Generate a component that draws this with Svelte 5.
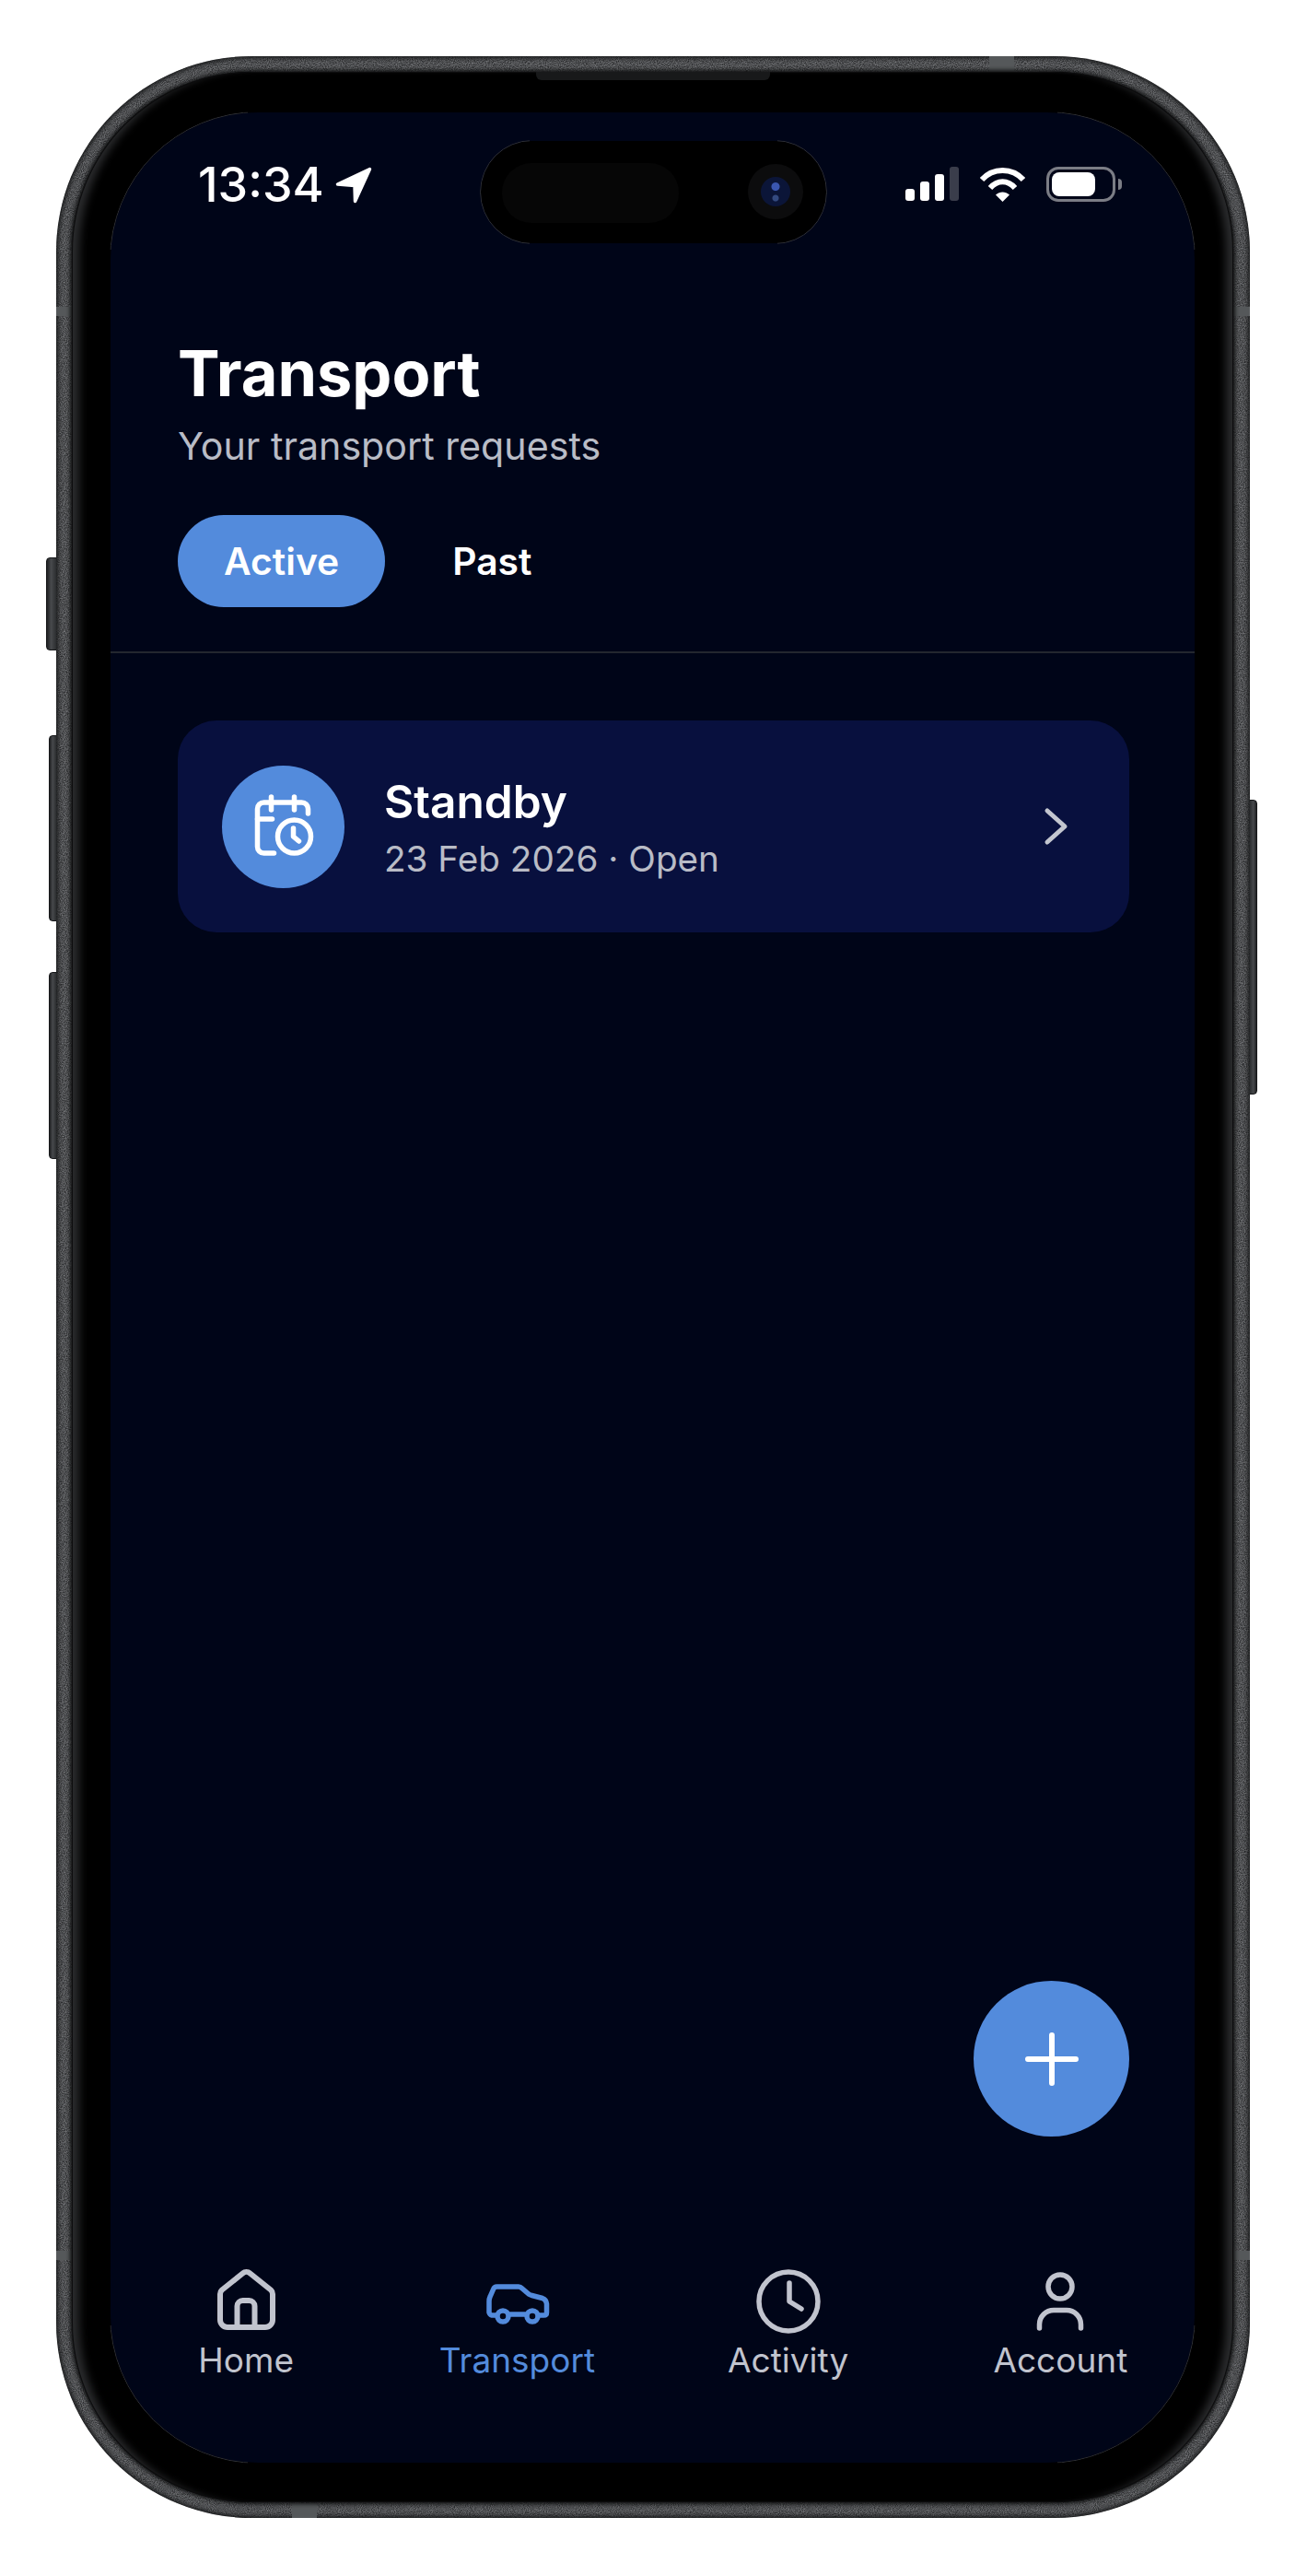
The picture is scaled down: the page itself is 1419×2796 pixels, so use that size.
<script lang="ts">
  const tabs = [
    { label: 'Active', active: true },
    { label: 'Past', active: false }
  ]
</script>

<div class="device">
  <span class="btn mute"></span>
  <span class="btn vol-up"></span>
  <span class="btn vol-down"></span>
  <span class="btn power"></span>

  <div class="phone">
    <svg class="grain" aria-hidden="true">
      <filter id="metal">
        <feTurbulence type="fractalNoise" baseFrequency="0.95" numOctaves="2" />
        <feColorMatrix values="0 0 0 0 0.46  0 0 0 0 0.47  0 0 0 0 0.49  0.9 0 0 0 -0.18" />
      </filter>
      <rect width="100%" height="100%" filter="url(#metal)" />
    </svg>
    <span class="rim"></span>
    <span class="band band-top"></span>
    <span class="band band-left-a"></span>
    <span class="band band-left-b"></span>
    <span class="band band-right-a"></span>
    <span class="band band-right-b"></span>
    <span class="band band-bottom"></span>

    <div class="bezel">
      <span class="speaker"></span>
      <div class="screen">
        <div class="island">
          <span class="faceid"></span>
          <span class="camera"><span class="lens"></span></span>
        </div>

        <div class="status">
          <div class="clock">
            <span class="time">13:34</span>
            <svg width="40" height="40" viewBox="0 0 40 40" aria-hidden="true">
              <path d="M37.5 2.5 L2.5 19 L21 20.5 L21.5 37.5 Z" fill="#fff" stroke="#fff" stroke-width="3.5" stroke-linejoin="round" />
            </svg>
          </div>
          <div class="indicators">
            <div class="signal">
              <span class="s1"></span>
              <span class="s2"></span>
              <span class="s3"></span>
              <span class="s4"></span>
            </div>
            <svg width="51" height="38" viewBox="0 0 51 38" fill="none" stroke="#fff" aria-hidden="true">
              <path d="M3 14 C15 0.5 36 0.5 48 14" stroke-width="6" />
              <path d="M12 23 C20 14 31 14 39 23" stroke-width="6" />
              <path d="M18 30.5 C22.5 26.5 28.5 26.5 33 30.5 L25.5 38 Z" fill="#fff" stroke="none" />
            </svg>
            <div class="battery">
              <span class="level"></span>
              <span class="cap"></span>
            </div>
          </div>
        </div>

        <header class="header">
          <h1>Transport</h1>
          <p>Your transport requests</p>
        </header>

        <div class="tabs">
          {#each tabs as tab}
            <button class="tab" class:active={tab.active}>{tab.label}</button>
          {/each}
        </div>

        <div class="list">
          <div class="card">
            <div class="card-icon">
              <svg width="66" height="70" viewBox="-1.5 0 66 70" fill="none" stroke="#fff" stroke-width="5.5" stroke-linecap="round" stroke-linejoin="round" aria-hidden="true">
                <path d="M21 64 H10 a7 7 0 0 1-7-7 V16 a7 7 0 0 1 7-7 H51 a7 7 0 0 1 7 7 V21" />
                <path d="M3 27 H19" />
                <path d="M18 3 V17" />
                <path d="M43 3 V17" />
                <circle cx="43" cy="46" r="18" />
                <path d="M42 37 V46 L48 51" />
              </svg>
            </div>
            <div class="card-text">
              <div class="card-title">Standby</div>
              <div class="card-sub">23 Feb 2026 · Open</div>
            </div>
            <svg class="chevron" width="30" height="44" viewBox="0 0 30 44" fill="none" stroke="#c3c6cf" stroke-width="5" stroke-linecap="round" stroke-linejoin="round" aria-hidden="true">
              <path d="M5 5 L24 22 L5 39" />
            </svg>
          </div>
        </div>

        <button class="fab" aria-label="Add">
          <svg width="64" height="64" viewBox="0 0 64 64" stroke="#fff" stroke-width="6" stroke-linecap="round" aria-hidden="true">
            <path d="M32 6 V58 M6 32 H58" />
          </svg>
        </button>

        <nav class="nav">
          <div class="nav-item">
            <svg width="72" height="72" viewBox="0 0 72 72" fill="none" stroke="currentColor" stroke-width="6" stroke-linejoin="round" aria-hidden="true">
              <g transform="translate(5 1)">
                <path d="M3 27 a6 6 0 0 1 2-4.5 L27.5 4.5 a6 6 0 0 1 8 0 L58 22.5 a6 6 0 0 1 2 4.5 V55 a8 8 0 0 1-8 8 H11 a8 8 0 0 1-8-8 Z" />
                <path d="M21.5 63 V40 a6 6 0 0 1 6-6 h7 a6 6 0 0 1 6 6 V63" />
              </g>
            </svg>
            <span>Home</span>
          </div>
          <div class="nav-item current">
            <svg width="72" height="72" viewBox="0 0 72 72" fill="none" stroke="currentColor" stroke-width="5.5" stroke-linecap="round" stroke-linejoin="round" aria-hidden="true">
              <g transform="translate(3 17)">
                <path d="M11 34 H6 a4 4 0 0 1-3-3 V19 q0-3 1-5 l3.5-8 q1-3 4-3 H35 q2 0 4 2 l7 6 q1.5 1 3.5 1.5 L61 15.5 q4 1.5 4.5 6 V31 q0 3-3 3 H58" />
                <path d="M26 33 H42" />
                <circle cx="18" cy="35" r="6" />
                <circle cx="50" cy="35" r="6" />
              </g>
            </svg>
            <span>Transport</span>
          </div>
          <div class="nav-item">
            <svg width="72" height="72" viewBox="0 0 72 72" fill="none" stroke="currentColor" stroke-width="5.5" stroke-linecap="round" stroke-linejoin="round" aria-hidden="true">
              <circle cx="36" cy="36" r="32" />
              <path d="M37 16 V36 L50 44" />
            </svg>
            <span>Activity</span>
          </div>
          <div class="nav-item shifted">
            <svg width="72" height="72" viewBox="0 0 72 72" fill="none" stroke="currentColor" stroke-width="5.5" stroke-linecap="round" stroke-linejoin="round" aria-hidden="true">
              <circle cx="36" cy="20" r="13" />
              <path d="M13.5 65 V61 a15.5 15.5 0 0 1 15.5-15.5 H43 a15.5 15.5 0 0 1 15.5 15.5 V65" />
            </svg>
            <span>Account</span>
          </div>
        </nav>
      </div>
      <span class="screen-edge"></span>
    </div>
  </div>
</div>

<style>
  :global(body) {
    background: #fff;
    font-family: Inter, 'Noto Sans', sans-serif;
  }

  .device {
    position: relative;
    width: 1296px;
    height: 2672px;
    margin: 61px 0 0 61px;
  }

  .btn {
    position: absolute;
    background: linear-gradient(90deg, #1f2022, #47494c 45%, #2c2e30);
    border: 1px solid #17181a;
    box-sizing: border-box;
  }

  .mute {
    left: -11px;
    top: 544px;
    width: 12px;
    height: 101px;
    border-radius: 4px 0 0 4px;
  }

  .vol-up {
    left: -8px;
    top: 737px;
    width: 9px;
    height: 202px;
    border-radius: 4px 0 0 4px;
  }

  .vol-down {
    left: -8px;
    top: 994px;
    width: 9px;
    height: 203px;
    border-radius: 4px 0 0 4px;
  }

  .power {
    right: -8px;
    top: 807px;
    width: 9px;
    height: 320px;
    border-radius: 0 4px 4px 0;
    background: linear-gradient(270deg, #1f2022, #47494c 45%, #2c2e30);
  }

  .phone {
    position: relative;
    height: 100%;
    overflow: hidden;
    border-radius: 212px;
    background: #2a2b2d;
  }

  .grain {
    position: absolute;
    inset: 0;
    width: 100%;
    height: 100%;
  }

  .rim {
    position: absolute;
    inset: 0;
    border-radius: inherit;
    box-shadow: inset 0 0 5px 2px #161718;
  }

  .band {
    position: absolute;
    background: #55585a;
  }

  .band-top {
    left: 1013px;
    top: 0;
    width: 27px;
    height: 17px;
  }

  .band-left-a,
  .band-right-a,
  .band-left-b,
  .band-right-b {
    width: 18px;
    height: 10px;
    top: 272px;
  }

  .band-left-a,
  .band-left-b {
    left: 0;
  }

  .band-right-a,
  .band-right-b {
    right: 0;
  }

  .band-left-b,
  .band-right-b {
    top: 2382px;
  }

  .band-bottom {
    left: 256px;
    bottom: 0;
    width: 27px;
    height: 16px;
  }

  .bezel {
    position: absolute;
    inset: 17px 18px 17px 17px;
    padding: 44px 42px 43px;
    box-sizing: border-box;
    border-radius: 195px;
    background: #000;
    box-shadow:
      0 0 4px 2px #101112,
      inset 0 0 0 1px #0c0c0d,
      inset 14px 0 10px -6px #2b2c2e,
      inset -14px 0 10px -6px #2b2c2e;
  }

  .speaker {
    position: absolute;
    left: 504px;
    top: 0;
    width: 254px;
    height: 9px;
    background: #18191a;
    border-radius: 0 0 6px 6px;
  }

  .screen {
    position: relative;
    display: flex;
    flex-direction: column;
    height: 100%;
    overflow: hidden;
    border-radius: 160px;
    background: #000518;
    color: #fff;
  }

  /* faint hairline the mockup leaves around the rounded corners only */
  .screen-edge {
    position: absolute;
    inset: 43px 41px 42px;
    border: 1px solid #2e3036;
    border-radius: 161px;
    pointer-events: none;
    --c: linear-gradient(#000 0 0);
    mask:
      var(--c) top left / 150px 150px no-repeat,
      var(--c) top right / 150px 150px no-repeat,
      var(--c) bottom left / 150px 150px no-repeat,
      var(--c) bottom right / 150px 150px no-repeat;
  }

  .island {
    position: absolute;
    left: 402px;
    top: 31px;
    width: 375px;
    height: 111px;
    border-radius: 56px;
    background: #000;
  }

  .island::after {
    content: '';
    position: absolute;
    inset: -1px;
    border: 1px solid #2e3036;
    border-radius: 57px;
    --c: linear-gradient(#000 0 0);
    mask:
      var(--c) left / 54px 100% no-repeat,
      var(--c) right / 54px 100% no-repeat;
  }

  .faceid {
    position: absolute;
    left: 23px;
    top: 24px;
    width: 192px;
    height: 65px;
    border-radius: 32px;
    background: #060606;
  }

  .camera {
    position: absolute;
    left: 290px;
    top: 25px;
    width: 60px;
    height: 60px;
    display: flex;
    align-items: center;
    justify-content: center;
    border-radius: 50%;
    background: #0c0c0d;
  }

  .lens {
    width: 32px;
    height: 32px;
    border-radius: 50%;
    background:
      radial-gradient(circle at 50% 33%, #3a56b0 0 4px, transparent 5px),
      radial-gradient(circle at 50% 72%, #33497f 0 3px, transparent 4px),
      #0b1538;
  }

  .status {
    display: flex;
    justify-content: space-between;
    align-items: flex-start;
    height: 243px;
    padding: 59px 79px 0 95px;
    box-sizing: border-box;
  }

  .clock {
    display: flex;
    align-items: center;
    gap: 12px;
    height: 40px;
  }

  .time {
    font-size: 52px;
    font-weight: 500;
    line-height: 40px;
  }

  .indicators {
    display: flex;
    align-items: flex-start;
    gap: 22px;
  }

  .signal {
    display: flex;
    align-items: flex-end;
    gap: 6px;
    height: 37px;
    margin-right: 0;
  }

  .signal span {
    width: 10px;
    border-radius: 3px;
    background: #fff;
  }

  .s1 { height: 13px; }
  .s2 { height: 21px; }
  .s3 { height: 29px; }
  .signal .s4 { height: 37px; background: #3a3d4b; }

  .battery {
    position: relative;
    width: 75px;
    height: 38px;
    margin-right: 7px;
    padding: 3px;
    box-sizing: border-box;
    border: 3px solid #7b7d85;
    border-radius: 13px;
  }

  .level {
    display: block;
    width: 47px;
    height: 26px;
    border-radius: 8px;
    background: #fff;
  }

  .cap {
    position: absolute;
    right: -10px;
    top: 10px;
    width: 4px;
    height: 12px;
    border-radius: 0 4px 4px 0;
    background: #7b7d85;
  }

  .header {
    padding: 0 73px;
  }

  h1 {
    margin: 0;
    font-size: 68.4px;
    font-weight: 700;
    line-height: 80px;
  }

  .header p {
    margin: 14px 0 0;
    font-size: 41.2px;
    line-height: 50px;
    color: #b9bcc6;
  }

  .tabs {
    display: flex;
    gap: 23px;
    padding: 50px 73px 0;
    height: 100px;
  }

  .tab {
    height: 100px;
    padding: 0 50px;
    border: 0;
    border-radius: 50px;
    background: none;
    color: #fff;
    font: 600 40.8px Inter, sans-serif;
  }

  .tab.active {
    background: #538bdc;
  }

  .list {
    flex: 1;
    margin-top: 48px;
    padding: 73px 71px 0 73px;
    border-top: 2px solid #23272f;
  }

  .card {
    display: flex;
    align-items: center;
    height: 230px;
    padding: 0 64px 0 48px;
    box-sizing: border-box;
    border-radius: 42px;
    background: #08103e;
  }

  .card-icon {
    display: flex;
    align-items: center;
    justify-content: center;
    flex: none;
    width: 133px;
    height: 133px;
    border-radius: 50%;
    background: #538bdc;
  }

  .card-text {
    flex: 1;
    margin-left: 43px;
    padding-top: 2px;
  }

  .card-title {
    font-size: 49.6px;
    font-weight: 600;
    line-height: 58px;
  }

  .card-sub {
    margin-top: 10px;
    font-size: 38.7px;
    line-height: 46px;
    color: #b9bcc6;
  }

  .fab {
    position: absolute;
    right: 71px;
    bottom: 354px;
    width: 169px;
    height: 169px;
    display: flex;
    align-items: center;
    justify-content: center;
    padding: 0;
    border: 0;
    border-radius: 50%;
    background: #538bdc;
  }

  .nav {
    display: grid;
    grid-template-columns: repeat(4, 1fr);
    padding-bottom: 90px;
    color: #c1c4ce;
  }

  .nav-item {
    display: flex;
    flex-direction: column;
    align-items: center;
    gap: 7px;
    font-size: 37px;
    font-weight: 400;
    line-height: 42px;
  }

  .nav-item.current {
    color: #538bdc;
  }

  .nav-item.shifted {
    padding-left: 3px;
  }
</style>
